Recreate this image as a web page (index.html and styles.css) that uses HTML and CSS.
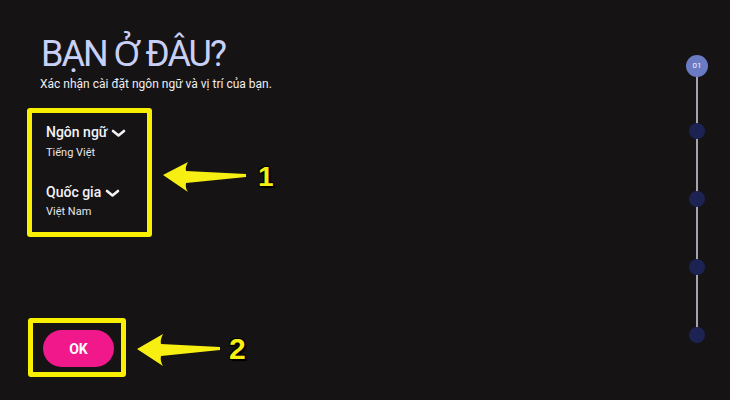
FILE: index.html
```html
<!DOCTYPE html>
<html lang="vi">
<head>
<meta charset="utf-8">
<title>Bạn ở đâu?</title>
<link rel="stylesheet" href="styles.css">
</head>
<body>
<div class="page">
  <div class="main">
    <h1 class="title">BẠN <span class="o-horn">&#x1EDE;</span> ĐÂU?</h1>
    <p class="subtitle">Xác nhận cài đặt ngôn ngữ và vị trí của bạn.</p>

    <div class="row row-1">
      <div class="hl-box settings">
        <div class="field">
          <div class="label">Ngôn ngữ <svg class="chev" width="15" height="9" viewBox="0 0 15 9"><path d="M2 2 L7.5 6.5 L13 2" fill="none" stroke="#f2f2f6" stroke-width="2.6" stroke-linecap="round" stroke-linejoin="round"/></svg></div>
          <div class="value">Tiếng Việt</div>
        </div>
        <div class="field field-2">
          <div class="label">Quốc gia <svg class="chev" width="15" height="9" viewBox="0 0 15 9"><path d="M2 2 L7.5 6.5 L13 2" fill="none" stroke="#f2f2f6" stroke-width="2.6" stroke-linecap="round" stroke-linejoin="round"/></svg></div>
          <div class="value">Việt Nam</div>
        </div>
      </div>
      <svg class="arrow arrow-1" width="84" height="32" viewBox="0 0 84 32"><path d="M0 14 L25 1 Q22 6 23 10 L83 13 L83 16 L23 22 Q22 27 25 31 Z" fill="#f7ef12"/></svg>
      <span class="num num-1">1</span>
    </div>

    <div class="row row-2">
      <div class="hl-box ok-box">
        <button class="ok">OK</button>
      </div>
      <svg class="arrow arrow-2" width="84" height="33" viewBox="0 0 84 33"><path d="M0 15 L26 0 Q23 6 24 10 L83 13 L83 16 L24 22 Q23 27 26 32 Z" fill="#f7ef12"/></svg>
      <span class="num num-2">2</span>
    </div>
  </div>

  <div class="stepper">
    <div class="step step-active">01</div>
    <div class="step"></div>
    <div class="step"></div>
    <div class="step"></div>
    <div class="step"></div>
  </div>
</div>
</body>
</html>
```

FILE: styles.css
```css
* { box-sizing: border-box; }

html, body {
  margin: 0;
  padding: 0;
  background: #151314;
}

body {
  width: 730px;
  height: 400px;
  overflow: hidden;
  font-family: Roboto, "Liberation Sans", "Noto Sans", sans-serif;
  color: #f0f0f4;
}

.page {
  display: flex;
  height: 400px;
}

.main {
  flex: 1;
  padding-left: 27px;
  padding-top: 33px;
}

.title {
  margin: 0 0 0 14px;
  font-size: 36px;
  line-height: 40px;
  font-weight: 400;
  color: #c8d0f6;
  letter-spacing: -2px;
}

.o-horn {
  font-family: "Noto Sans", "DejaVu Sans", sans-serif;
  font-size: 34px;
  letter-spacing: -1.5px;
}

.subtitle {
  margin: 3px 0 0 13px;
  font-size: 12px;
  line-height: 14px;
  color: #eeeef2;
}

.row {
  display: flex;
  align-items: flex-start;
}

.row-1 { margin-top: 17px; }
.row-2 { margin-top: 81px; margin-left: 1px; }

.hl-box {
  border: 5px solid #f8f000;
  border-radius: 3px;
}

.settings {
  width: 125px;
  padding: 11px 10px 13px 14px;
}

.field-2 { margin-top: 24px; }

.label {
  display: flex;
  align-items: center;
  gap: 4px;
  font-size: 14px;
  line-height: 17px;
  font-weight: 500;
  color: #f4f4f8;
}

.chev { margin-top: 1px; }

.value {
  margin-top: 5px;
  font-size: 11px;
  line-height: 14px;
  color: #e6e6ec;
}

.field-2 .value { margin-top: 4px; }

.arrow { margin-left: 11px; flex: none; }
.arrow-1 { margin-top: 53px; }
.arrow-2 { margin-top: 16px; }

.num {
  font-family: "Liberation Sans", Arial, sans-serif;
  font-weight: 700;
  color: #f7ef12;
  text-shadow: 1px 1px 0 #000, -1px 1px 0 #000, 1px -1px 0 #000, -1px -1px 0 #000, 2px 2px 1px #000;
}

.num-1 {
  margin-left: 11px;
  margin-top: 53px;
  font-size: 28px;
  line-height: 32px;
}

.num-2 {
  margin-left: 8px;
  margin-top: 15px;
  font-size: 30px;
  line-height: 32px;
}

.ok-box {
  width: 98px;
  height: 59px;
  padding: 7px 0 0 10px;
}

.ok {
  display: block;
  width: 71px;
  height: 37px;
  border: none;
  border-radius: 19px;
  background: #f0188a;
  color: #ffffff;
  font-family: Roboto, "Liberation Sans", sans-serif;
  font-size: 14px;
  font-weight: 700;
  padding: 0;
}

.stepper {
  position: relative;
  width: 22px;
  margin-right: 22px;
  padding-top: 55px;
  display: flex;
  flex-direction: column;
  align-items: center;
}

.stepper::before {
  content: "";
  position: absolute;
  left: 10px;
  top: 66px;
  width: 2px;
  height: 269px;
  background: #a2a2b0;
}

.step {
  position: relative;
  width: 16px;
  height: 16px;
  margin-top: 52px;
  border-radius: 50%;
  background: #1c2352;
}

.step-active {
  width: 22px;
  height: 22px;
  margin-top: 0;
  background: #6a7bc4;
  color: #f0f2ff;
  font-size: 8px;
  line-height: 22px;
  text-align: center;
}

.step-active + .step { margin-top: 46px; }
```
